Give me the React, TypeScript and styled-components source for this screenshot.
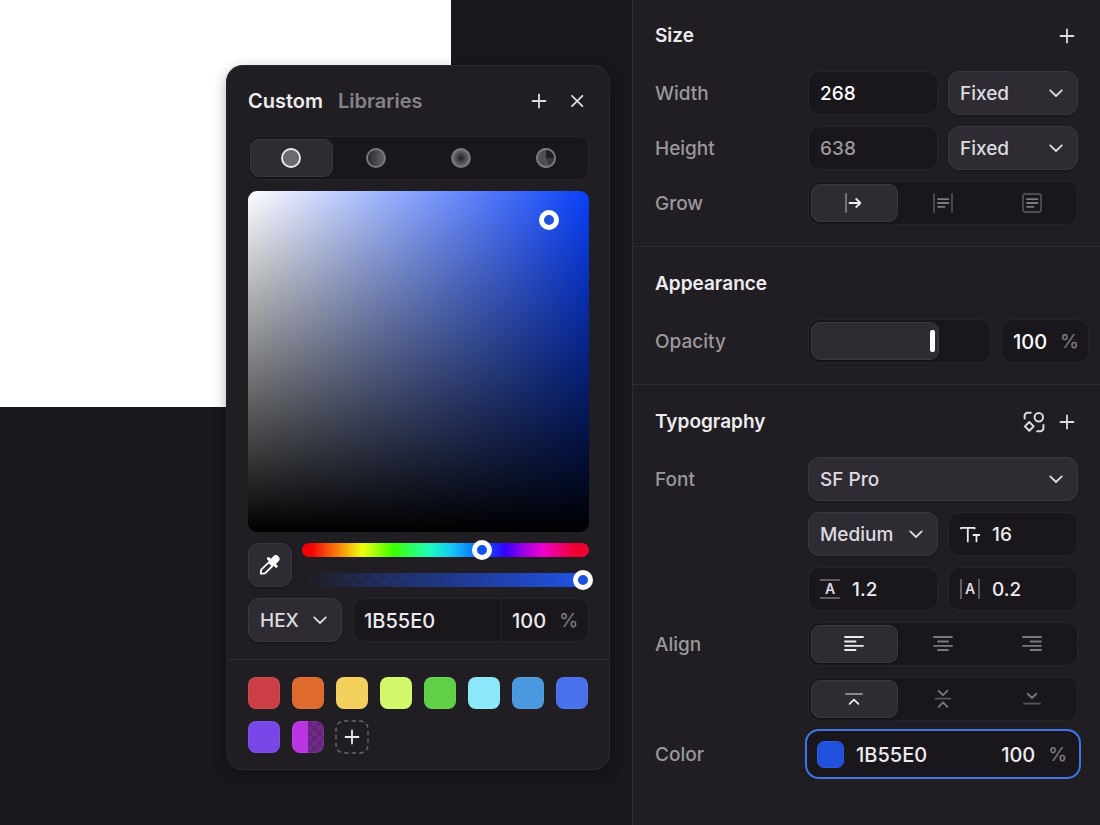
import React, { useState } from 'react';
import styled, { createGlobalStyle, css } from 'styled-components';

const c = {
  canvas: '#19171c',
  panel: '#201e23',
  field: '#19171c',
  fieldEdge: '#272529',
  raised: '#2e2c32',
  raisedEdge: '#3b393f',
  line: '#2e2c31',
  text: '#edebef',
  soft: '#dddbe0',
  muted: '#9a989d',
  faint: '#7b797e',
  focus: '#3d76ea',
};

const GlobalStyle = createGlobalStyle`
  *, *::before, *::after { box-sizing: border-box; }
  body {
    margin: 0;
    background: ${c.canvas};
    color: ${c.text};
    font: 500 19px/24px Inter, "Liberation Sans", sans-serif;
  }
  button, input, select { font: inherit; color: inherit; margin: 0; }
`;

const Page = styled.div`
  display: flex;
  min-height: 100vh;
`;

const Canvas = styled.main`
  position: relative;
  flex: 1;
  min-width: 0;
  min-height: 800px;
`;

const Artboard = styled.div`
  width: calc(100% - 181px);
  height: 407px;
  background: #fff;
`;

const Inspector = styled.aside`
  flex: none;
  width: 468px;
  background: ${c.panel};
  border-left: 1px solid ${c.line};
`;

const Section = styled.section`
  padding: 14px 22px 21px;
  & + & {
    padding-top: 15px;
    border-top: 1px solid ${c.line};
  }
`;

const SectionHead = styled.header`
  display: flex;
  align-items: center;
  gap: 11px;
  height: 44px;
  margin-bottom: 13px;
`;

const Title = styled.h2`
  flex: 1;
  margin: 0;
  font-size: 19px;
  font-weight: 600;
`;

const Rows = styled.div`
  display: grid;
  gap: 11px;
`;

const Row = styled.div<{ $bleed?: boolean }>`
  display: grid;
  grid-template-columns: 153px minmax(0, 1fr);
  align-items: center;
  margin-right: ${(p) => (p.$bleed ? '-11px' : '0')};
`;

const RowLabel = styled.label`
  padding-top: 2px;
  color: ${c.muted};
`;

const Controls = styled.div<{ $cols?: string }>`
  grid-column: 2;
  display: grid;
  grid-template-columns: ${(p) => p.$cols ?? '1fr'};
  gap: 10px;
`;

const IconButton = styled.button`
  display: grid;
  place-items: center;
  width: 22px;
  height: 22px;
  padding: 0;
  border: 0;
  background: none;
  color: ${c.soft};
  cursor: pointer;
`;

const box = css`
  height: 44px;
  border: 1px solid ${c.fieldEdge};
  border-radius: 11px;
  background: ${c.field};
`;

const raised = css`
  border: 1px solid ${c.raisedEdge};
  background: ${c.raised};
  box-shadow: 0 1px 2px rgba(0, 0, 0, 0.3);
`;

const FieldBox = styled.div<{ $active?: boolean }>`
  ${box}
  display: flex;
  align-items: center;
  gap: 12px;
  min-width: 0;
  padding: 0 10px 0 11px;
  ${(p) => p.$active && css`
    border-color: ${c.field};
    outline: 2px solid ${c.focus};
    outline-offset: 1px;
    box-shadow: 0 0 0 1px ${c.field};
  `}
`;

const TextInput = styled.input<{ $tone?: string; $code?: boolean; $width?: string }>`
  flex: ${(p) => (p.$width ? 'none' : '1')};
  width: ${(p) => p.$width ?? '100%'};
  min-width: 0;
  padding: 2px 0 0;
  border: 0;
  outline: 0;
  background: none;
  font-size: ${(p) => (p.$code ? '20px' : '19px')};
  color: ${(p) => p.$tone ?? c.text};
`;

const Unit = styled.span`
  padding-top: 2px;
  color: ${c.faint};
`;

const SelectWrap = styled.div`
  display: grid;
  align-items: center;
  & > * { grid-area: 1 / 1; }
  & > svg {
    justify-self: end;
    margin-right: 14px;
    pointer-events: none;
    color: ${c.soft};
  }
`;

const SelectBox = styled.select`
  ${raised}
  appearance: none;
  width: 100%;
  height: 44px;
  padding: 2px 34px 0 11px;
  border-radius: 11px;
  color: ${c.soft};
`;

const SegmentGroup = styled.div<{ $count: number }>`
  ${box}
  display: grid;
  grid-template-columns: repeat(${(p) => p.$count}, 1fr);
  gap: 2px;
  padding: 2px ${(p) => (p.$count > 3 ? '1px' : '2px')};
`;

const Segment = styled.button<{ $on: boolean }>`
  display: grid;
  place-items: center;
  padding: 0;
  border: 1px solid transparent;
  border-radius: 9px;
  background: none;
  color: ${(p) => (p.$on ? c.text : c.faint)};
  cursor: pointer;
  ${(p) => p.$on && raised}
`;

const OpacityTrack = styled.div`
  ${box}
  display: grid;
  padding: 2px;
  & > * { grid-area: 1 / 1; }
`;

const OpacityFill = styled.div`
  ${raised}
  max-width: 100%;
  border-radius: 9px;
`;

const OpacityRange = styled.input`
  appearance: none;
  width: 100%;
  height: 38px;
  background: none;
  &::-webkit-slider-thumb {
    appearance: none;
    width: 5px;
    height: 22px;
    border-radius: 2px;
    background: #fff;
  }
`;

const LineGlyph = styled.span<{ $side?: boolean }>`
  flex: none;
  width: 20px;
  height: 20px;
  border: 0 solid #5f5d62;
  border-width: ${(p) => (p.$side ? '0 2px' : '2px 0')};
  color: ${c.soft};
  font-size: 14px;
  font-weight: 600;
  line-height: ${(p) => (p.$side ? '20px' : '16px')};
  text-align: center;
`;

const ColorChip = styled.button`
  flex: none;
  width: 27px;
  height: 27px;
  margin-left: -3px;
  padding: 0;
  border: 1px solid #2c59de;
  border-radius: 7px;
  background: #2150dc;
`;

const Picker = styled.section`
  position: absolute;
  top: 65px;
  right: 22px;
  width: 384px;
  border: 1px solid #2e2c31;
  border-left-color: #242227;
  border-radius: 17px;
  background: ${c.panel};
  box-shadow: 0 4px 14px rgba(0, 0, 0, 0.3);
`;

const PickerHead = styled.header`
  display: flex;
  align-items: center;
  gap: 16px;
  height: 70px;
  padding: 0 21px;
`;

const Tabs = styled.div`
  flex: 1;
  display: flex;
  gap: 15px;
`;

const Tab = styled.button<{ $on?: boolean }>`
  padding: 0;
  border: 0;
  background: none;
  font-size: 20px;
  font-weight: 600;
  color: ${(p) => (p.$on ? c.text : '#858388')};
  cursor: pointer;
`;

const PickerBody = styled.div`
  display: grid;
  gap: 11px;
  padding: 0 20px 17px 21px;
`;

const Spectrum = styled.div`
  position: relative;
  height: 341px;
  border-radius: 9px;
  background:
    linear-gradient(to top, #000, transparent),
    linear-gradient(to right, #fff, #0940fa);
`;

const SpectrumKnob = styled.button`
  position: absolute;
  width: 20px;
  height: 20px;
  padding: 0;
  border: 5px solid #fff;
  border-radius: 50%;
  background: #2050dc;
  transform: translate(-50%, -50%);
`;

const SliderRow = styled.div`
  display: grid;
  grid-template-columns: 44px 1fr;
  gap: 10px;
`;

const PipetteButton = styled.button`
  ${raised}
  display: grid;
  place-items: center;
  height: 44px;
  padding: 0;
  border-radius: 11px;
  color: #fff;
`;

const Sliders = styled.div`
  display: flex;
  flex-direction: column;
  justify-content: space-between;
`;

const Track = styled.div<{ $paint: string }>`
  display: flex;
  align-items: center;
  height: 14px;
  border-radius: 7px;
  background: ${(p) => p.$paint};
`;

const TrackRange = styled.input<{ $knob: string }>`
  appearance: none;
  flex: 1;
  min-width: 0;
  height: 20px;
  margin: 0 -4px;
  background: none;
  &::-webkit-slider-thumb {
    appearance: none;
    width: 20px;
    height: 20px;
    border: 5px solid #fff;
    border-radius: 50%;
    background: ${(p) => p.$knob};
  }
`;

const ValueRow = styled.div`
  display: grid;
  grid-template-columns: 94px 1fr;
  gap: 11px;
`;

const SplitBox = styled.div`
  ${box}
  display: grid;
  grid-template-columns: 1fr 87px;
`;

const SplitCell = styled.div`
  display: flex;
  align-items: center;
  justify-content: space-between;
  padding: 0 10px;
  & + & { border-left: 1px solid ${c.fieldEdge}; }
`;

const Swatches = styled.div`
  display: grid;
  grid-template-columns: repeat(8, 32px);
  justify-content: space-between;
  gap: 12px 0;
  padding: 17px 21px 16px;
  border-top: 1px solid ${c.line};
`;

const Swatch = styled.button<{ $paint: string }>`
  height: 32px;
  padding: 0;
  border: 0;
  border-radius: 8px;
  background: ${(p) => p.$paint};
  box-shadow: inset 0 0 0 1px rgba(255, 255, 255, 0.06);
`;

const AddSwatch = styled.button`
  width: 34px;
  height: 34px;
  margin: -1px;
  padding: 0;
  border: 0;
  background: none;
  color: ${c.text};
  & > svg { display: block; }
`;

const HUE = 'linear-gradient(to right, #f00008 3%, #fa7a0c 12%, #eeff10 21%, #3cff00 32%, #1effb8 44%, #14c8f8 52%, #0c58ff 63%, #3400fa 71%, #9a00e4 77%, #f000cc 84%, #ee0030 95%)';
const ALPHA = `linear-gradient(to right, #201e23 2%, rgba(31, 46, 98, 0.8) 24%, #203c9c 60%, #1f50dc 94%), repeating-conic-gradient(#1a191e 0 25%, #2c2c38 0 50%) 0 0 / 14px 14px`;
const HALF = 'linear-gradient(to right, #ba35e2 50%, rgba(126, 36, 156, 0.72) 50%), repeating-conic-gradient(#26202c 0 25%, #48404e 0 50%) 0 0 / 10px 10px';

const swatches: [string, string][] = [
  ['Red', '#cc3e46'],
  ['Orange', '#de6a2e'],
  ['Yellow', '#f3cf5b'],
  ['Lime', '#d1f96b'],
  ['Green', '#60d046'],
  ['Cyan', '#8ae8f8'],
  ['Sky', '#4a98de'],
  ['Blue', '#4871eb'],
  ['Violet', '#7847e8'],
  ['Purple, half transparent', HALF],
];

type GlyphProps = { size?: number; width?: number; children: React.ReactNode };

const Glyph = ({ size = 20, width = 1.8, children }: GlyphProps) => (
  <svg
    width={size}
    height={size}
    viewBox={`0 0 ${size} ${size}`}
    fill="none"
    stroke="currentColor"
    strokeWidth={width}
    strokeLinecap="round"
    strokeLinejoin="round"
    aria-hidden="true"
  >
    {children}
  </svg>
);

const Plus = () => <Glyph size={22}><path d="M11 4.5v13M4.5 11h13" /></Glyph>;
const Close = () => <Glyph size={22}><path d="M6 5.8l10.4 10.4M16.4 5.8L6 16.2" /></Glyph>;
const Chevron = () => <Glyph size={16}><path d="M2.2 5.4L8 11l5.8-5.6" /></Glyph>;
const Styles = () => (
  <Glyph size={22} width={2}>
    <circle cx="15.8" cy="6.2" r="4.2" />
    <path d="M6.3 11l4.4 4.4-4.4 4.4-4.4-4.4z" />
    <path d="M1.6 7.6V4.8a3 3 0 0 1 3-3h3.2M20.4 14v3.2a3 3 0 0 1-3 3h-3.2" />
  </Glyph>
);
const Pipette = () => (
  <Glyph size={22}>
    <path d="M9.8 8.4L2.2 15.7 1.8 19.7 6 19.4 13.4 12" />
    <path d="M9.4 4.6l7.8 7.6" strokeWidth="3" />
    <path d="M13.6 8.2l3.2-3.2" strokeWidth="7.4" />
  </Glyph>
);
const TypeSize = () => (
  <Glyph>
    <path d="M1 4.5V3.9h13.6v.6M7.8 4v13.4M13.4 11h6.2M16.5 11v6.4" />
  </Glyph>
);

const growIcons = [
  <Glyph key="fixed"><path d="M2 1v18" stroke="#7b797e" /><path d="M5.5 10h10.8M12.2 6l4.2 4-4.2 4" width="2" /></Glyph>,
  <Glyph key="width"><path d="M1 1v18M19 1v18" stroke="#4f4d52" /><path d="M5 6.2h10.5M5 10h10.5M5 13.8h6.5" /></Glyph>,
  <Glyph key="both"><rect x="1" y="1" width="18" height="18" rx="2" stroke="#4f4d52" /><path d="M5 6.2h10.5M5 10h10.5M5 13.8h6.5" /></Glyph>,
];
const alignIcons = [
  <Glyph key="left"><path d="M1 3h18M1 7.5h10.5M1 11.8h18M1 16h10.5" /></Glyph>,
  <Glyph key="center"><path d="M1 3h18M5 7.5h10M1 11.8h18M5 16h10" /></Glyph>,
  <Glyph key="right"><path d="M1 3h18M8.5 7.5H19M1 11.8h18M8.5 16H19" /></Glyph>,
];
const verticalIcons = [
  <Glyph key="top"><path d="M2 5h16" stroke="#8a888d" /><path d="M5.6 14.8L10 10.6l4.4 4.2" /></Glyph>,
  <Glyph key="middle"><path d="M2.5 9.7H17.5" stroke="#59575c" /><path d="M5.6 1.8l4.4 4.4 4.4-4.4M5.6 17.8L10 13.4l4.4 4.4" /></Glyph>,
  <Glyph key="bottom"><path d="M2 14.7h16" stroke="#59575c" /><path d="M5.6 4.6L10 9l4.4-4.4" /></Glyph>,
];
const fillIcons = [
  <Glyph key="solid"><circle cx="10" cy="10" r="9" fill="#6c6a6f" /></Glyph>,
  <Glyph key="linear">
    <defs><linearGradient id="fill-linear"><stop stopColor="#29272c" /><stop offset="1" stopColor="#68666b" /></linearGradient></defs>
    <circle cx="10" cy="10" r="9" fill="url(#fill-linear)" />
  </Glyph>,
  <Glyph key="radial">
    <defs><radialGradient id="fill-radial"><stop stopColor="#201e23" /><stop offset="1" stopColor="#77757a" /></radialGradient></defs>
    <circle cx="10" cy="10" r="9" fill="url(#fill-radial)" />
  </Glyph>,
  <Glyph key="angular">
    <circle cx="10" cy="10" r="9" fill="#504e53" />
    <path d="M10 10V1.5a8.5 8.5 0 0 1 8.5 8.5z" fill="#201e23" stroke="none" />
    <path d="M10 10h8.5a8.5 8.5 0 0 1-5.5 8z" fill="#3b393e" stroke="none" />
    <circle cx="10" cy="10" r="9" />
  </Glyph>,
];

type SegmentedProps = { label: string; names: string[]; icons: React.ReactNode[] };

function Segmented({ label, names, icons }: SegmentedProps) {
  const [active, setActive] = useState(0);
  return (
    <SegmentGroup $count={names.length} role="group" aria-label={label}>
      {names.map((name, i) => (
        <Segment
          key={name}
          type="button"
          aria-label={name}
          aria-pressed={i === active}
          $on={i === active}
          onClick={() => setActive(i)}
        >
          {icons[i]}
        </Segment>
      ))}
    </SegmentGroup>
  );
}

function Select({ id, label, options }: { id?: string; label: string; options: string[] }) {
  return (
    <SelectWrap>
      <SelectBox id={id} aria-label={label}>
        {options.map((o) => <option key={o}>{o}</option>)}
      </SelectBox>
      <Chevron />
    </SelectWrap>
  );
}

function ColorPicker() {
  const [hue, setHue] = useState(228);
  const [alpha, setAlpha] = useState(100);
  const [point] = useState({ x: 88.2, y: 8.4 });
  return (
    <Picker aria-label="Color picker">
      <PickerHead>
        <Tabs role="tablist">
          <Tab type="button" role="tab" aria-selected="true" $on>Custom</Tab>
          <Tab type="button" role="tab" aria-selected="false">Libraries</Tab>
        </Tabs>
        <IconButton type="button" aria-label="Add style"><Plus /></IconButton>
        <IconButton type="button" aria-label="Close"><Close /></IconButton>
      </PickerHead>
      <PickerBody>
        <Segmented label="Fill type" names={['Solid', 'Linear', 'Radial', 'Angular']} icons={fillIcons} />
        <Spectrum>
          <SpectrumKnob
            type="button"
            aria-label="Saturation and brightness"
            style={{ left: `${point.x}%`, top: `${point.y}%` }}
          />
        </Spectrum>
        <SliderRow>
          <PipetteButton type="button" aria-label="Pick a color"><Pipette /></PipetteButton>
          <Sliders>
            <Track $paint={HUE}>
              <TrackRange $knob="#1252ee" type="range" aria-label="Hue" min={0} max={360} value={hue} onChange={(e) => setHue(+e.target.value)} />
            </Track>
            <Track $paint={ALPHA}>
              <TrackRange $knob="#1e50dc" type="range" aria-label="Alpha" min={0} max={100} value={alpha} onChange={(e) => setAlpha(+e.target.value)} />
            </Track>
          </Sliders>
        </SliderRow>
        <ValueRow>
          <Select label="Color format" options={['HEX', 'RGB', 'HSL']} />
          <SplitBox>
            <SplitCell><TextInput $code aria-label="Hex value" defaultValue="1B55E0" /></SplitCell>
            <SplitCell><TextInput $code aria-label="Alpha percent" defaultValue="100" $width="38px" /><Unit>%</Unit></SplitCell>
          </SplitBox>
        </ValueRow>
      </PickerBody>
      <Swatches>
        {swatches.map(([name, paint]) => (
          <Swatch key={name} type="button" aria-label={name} $paint={paint} />
        ))}
        <AddSwatch type="button" aria-label="Add swatch">
          <svg width="34" height="34" viewBox="0 0 34 34" fill="none" stroke="currentColor" aria-hidden="true">
            <rect x="1" y="1" width="32" height="32" rx="8" stroke="#69676c" strokeWidth="1.4" strokeDasharray="4.4 3.2" />
            <path d="M17 10.5v13M10.5 17h13" strokeWidth="1.8" strokeLinecap="round" />
          </svg>
        </AddSwatch>
      </Swatches>
    </Picker>
  );
}

function OpacityRow() {
  const [level, setLevel] = useState(69);
  return (
    <Row $bleed>
      <RowLabel htmlFor="opacity">Opacity</RowLabel>
      <Controls $cols="1fr 88px">
        <OpacityTrack>
          <OpacityFill style={{ width: `calc(${level}% + 6px)` }} />
          <OpacityRange id="opacity" type="range" min={0} max={100} value={level} onChange={(e) => setLevel(+e.target.value)} />
        </OpacityTrack>
        <FieldBox>
          <TextInput $code aria-label="Opacity percent" defaultValue="100" $tone="#fff" $width="35px" />
          <Unit>%</Unit>
        </FieldBox>
      </Controls>
    </Row>
  );
}

export default function App() {
  return (
    <Page>
      <GlobalStyle />
      <Canvas>
        <Artboard />
        <ColorPicker />
      </Canvas>
      <Inspector>
        <Section>
          <SectionHead>
            <Title>Size</Title>
            <IconButton type="button" aria-label="Add size constraint"><Plus /></IconButton>
          </SectionHead>
          <Rows>
            <Row>
              <RowLabel htmlFor="width">Width</RowLabel>
              <Controls $cols="1fr 1fr">
                <FieldBox><TextInput id="width" defaultValue="268" $tone="#fff" /></FieldBox>
                <Select label="Width mode" options={['Fixed', 'Fill', 'Fit']} />
              </Controls>
            </Row>
            <Row>
              <RowLabel htmlFor="height">Height</RowLabel>
              <Controls $cols="1fr 1fr">
                <FieldBox><TextInput id="height" defaultValue="638" $tone={c.muted} /></FieldBox>
                <Select label="Height mode" options={['Fixed', 'Fill', 'Fit']} />
              </Controls>
            </Row>
            <Row>
              <RowLabel as="span">Grow</RowLabel>
              <Controls>
                <Segmented label="Grow" names={['Fixed size', 'Auto height', 'Auto size']} icons={growIcons} />
              </Controls>
            </Row>
          </Rows>
        </Section>
        <Section>
          <SectionHead><Title>Appearance</Title></SectionHead>
          <Rows><OpacityRow /></Rows>
        </Section>
        <Section>
          <SectionHead>
            <Title>Typography</Title>
            <IconButton type="button" aria-label="Text styles"><Styles /></IconButton>
            <IconButton type="button" aria-label="Add text style"><Plus /></IconButton>
          </SectionHead>
          <Rows>
            <Row>
              <RowLabel htmlFor="font">Font</RowLabel>
              <Controls><Select id="font" label="Font" options={['SF Pro', 'Inter']} /></Controls>
            </Row>
            <Row>
              <Controls $cols="1fr 1fr">
                <Select label="Font weight" options={['Medium', 'Regular', 'Bold']} />
                <FieldBox><TypeSize /><TextInput aria-label="Font size" defaultValue="16" /></FieldBox>
              </Controls>
            </Row>
            <Row>
              <Controls $cols="1fr 1fr">
                <FieldBox><LineGlyph aria-hidden="true">A</LineGlyph><TextInput aria-label="Line height" defaultValue="1.2" /></FieldBox>
                <FieldBox><LineGlyph $side aria-hidden="true">A</LineGlyph><TextInput aria-label="Letter spacing" defaultValue="0.2" /></FieldBox>
              </Controls>
            </Row>
            <Row>
              <RowLabel as="span">Align</RowLabel>
              <Controls>
                <Segmented label="Horizontal align" names={['Left', 'Center', 'Right']} icons={alignIcons} />
              </Controls>
            </Row>
            <Row>
              <Controls>
                <Segmented label="Vertical align" names={['Top', 'Middle', 'Bottom']} icons={verticalIcons} />
              </Controls>
            </Row>
            <Row>
              <RowLabel htmlFor="color">Color</RowLabel>
              <Controls>
                <FieldBox $active>
                  <ColorChip type="button" aria-label="Open color picker" />
                  <TextInput $code id="color" defaultValue="1B55E0" />
                  <TextInput $code aria-label="Color opacity percent" defaultValue="100" $width="35px" />
                  <Unit>%</Unit>
                </FieldBox>
              </Controls>
            </Row>
          </Rows>
        </Section>
      </Inspector>
    </Page>
  );
}
